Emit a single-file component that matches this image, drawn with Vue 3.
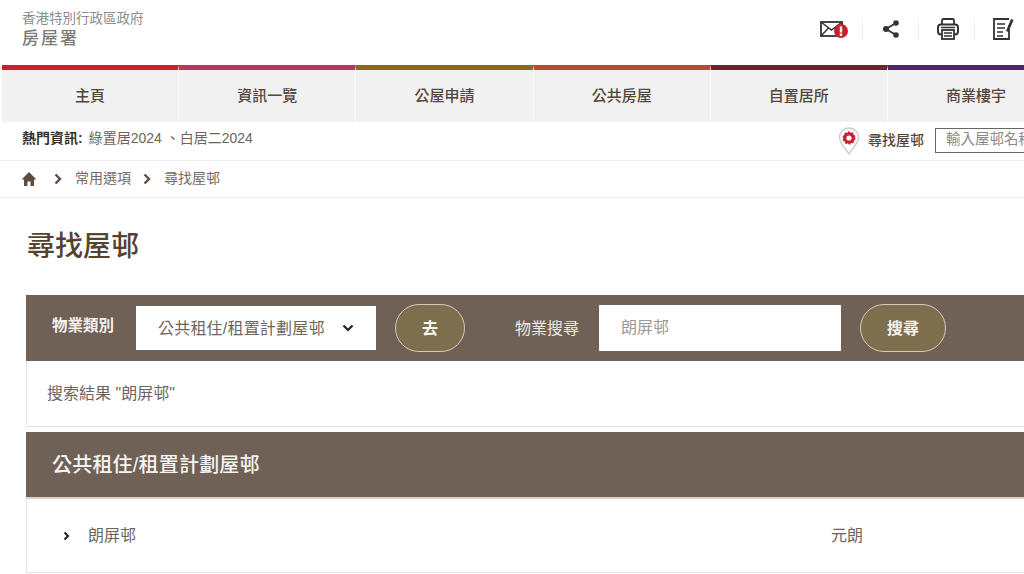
<script setup>
const navItems = [
  { label: '主頁', color: '#c8202f' },
  { label: '資訊一覽', color: '#b93562' },
  { label: '公屋申請', color: '#8a6a14' },
  { label: '公共房屋', color: '#b84d24' },
  { label: '自置居所', color: '#751f33' },
  { label: '商業樓宇', color: '#4f2767' },
]
</script>

<template>
  <div class="page">
    <header class="top">
      <div class="logo">
        <div class="logo-gov">香港特別行政區政府</div>
        <div class="logo-name">房屋署</div>
      </div>
      <div class="tools">
        <span class="tool tool-mail">
          <svg width="28" height="20" viewBox="0 0 28 20">
            <rect x="1" y="3" width="21" height="14" fill="#fff" stroke="#333" stroke-width="1.800" />
            <path d="M1 3l10.500 8L22 3M1 17l7.500-8M22 17l-7.500-8" fill="none" stroke="#333" stroke-width="1.400" />
            <circle cx="21" cy="12" r="7" fill="#c8202f" />
            <rect x="19.800" y="7.500" width="2.400" height="6" fill="#fff" />
            <rect x="19.800" y="14.500" width="2.400" height="2.400" fill="#fff" />
          </svg>
        </span>
        <span class="tool">
          <svg width="20" height="20" viewBox="0 0 20 20">
            <path d="M15 4L5 10l10 6" fill="none" stroke="#333" stroke-width="1.800" />
            <circle cx="15" cy="4" r="2.800" fill="#333" />
            <circle cx="5" cy="10" r="3" fill="#333" />
            <circle cx="15" cy="16" r="2.800" fill="#333" />
          </svg>
        </span>
        <span class="tool tool-print">
          <svg width="24" height="24" viewBox="0 0 24 24">
            <path d="M6 8V3.500Q6 2 7.500 2h9Q18 2 18 3.500V8" fill="none" stroke="#333" stroke-width="1.800" />
            <rect x="2" y="7.500" width="20" height="10" rx="3" fill="none" stroke="#333" stroke-width="2" />
            <rect x="6" y="13" width="12" height="9" fill="#fff" stroke="#333" stroke-width="1.800" />
            <path d="M8 16h8M8 19h8M5 10.500h14" stroke="#333" stroke-width="1.300" />
          </svg>
        </span>
        <span class="tool tool-last">
          <svg width="22" height="24" viewBox="0 0 22 24">
            <path d="M17 8v14H2V2h15" fill="none" stroke="#333" stroke-width="1.800" />
            <path d="M5 7h8M5 11h8M5 15h6M5 19h6" stroke="#333" stroke-width="1.600" />
            <path d="M14 14l5-12 2.500 1-5 12z" fill="#333" />
          </svg>
        </span>
      </div>
    </header>

    <nav class="nav">
      <div
        v-for="item in navItems"
        :key="item.label"
        class="nav-item"
        :style="{ borderTopColor: item.color }"
      >{{ item.label }}</div>
    </nav>

    <div class="hot">
      <div class="hot-left"><b>熱門資訊:</b><span class="hot-links">綠置居2024 、白居二2024</span></div>
      <div class="finder">
        <svg class="pin" width="22" height="28" viewBox="0 0 22 28">
          <path d="M11 27C7 21 1.500 16 1.500 10.500a9.500 9.500 0 0 1 19 0C20.500 16 15 21 11 27z" fill="#fff" stroke="#c9c9c9" stroke-width="1.300" />
          <circle cx="11" cy="11" r="4.200" fill="none" stroke="#c8202f" stroke-width="3.200" />
          <circle cx="11" cy="11" r="5.800" fill="none" stroke="#c8202f" stroke-width="1.400" stroke-dasharray="2 1.640" />
        </svg>
        <span class="finder-label">尋找屋邨</span>
        <div class="finder-input">輸入屋邨名稱</div>
      </div>
    </div>

    <div class="crumbs">
      <svg width="16" height="16" viewBox="0 0 16 16"><path d="M8 1L0.500 8.500H3V15h3.500v-4.500h3V15H13V8.500h2.500z" fill="#5e4c3e" /></svg>
      <svg class="chev" width="8" height="12" viewBox="0 0 8 12"><path d="M1.500 1.500L6 6l-4.500 4.500" fill="none" stroke="#5e4c3e" stroke-width="2.400" /></svg>
      <span class="up-more">常用選項</span>
      <svg class="chev chev-b" width="8" height="12" viewBox="0 0 8 12"><path d="M1.500 1.500L6 6l-4.500 4.500" fill="none" stroke="#5e4c3e" stroke-width="2.400" /></svg>
      <span class="up-more">尋找屋邨</span>
    </div>

    <main class="main">
      <h1 class="title">尋找屋邨</h1>

      <div class="search">
        <span class="search-label strong">物業類別</span>
        <div class="select">
          <span class="up spaced">公共租住/租置計劃屋邨</span>
          <svg width="12" height="8" viewBox="0 0 12 8"><path d="M1.500 1.500L6 6l4.500-4.500" fill="none" stroke="#222" stroke-width="2.200" /></svg>
        </div>
        <div class="btn btn-go">去</div>
        <span class="search-label second">物業搜尋</span>
        <div class="input">朗屏邨</div>
        <div class="btn btn-search">搜尋</div>
      </div>

      <div class="result"><span class="up">搜索結果 "朗屏邨"</span></div>

      <h2 class="section"><span class="up spaced">公共租住/租置計劃屋邨</span></h2>

      <div class="row">
        <svg class="row-chev" width="7" height="10" viewBox="0 0 7 10"><path d="M1.500 1.500L5 5 1.500 8.500" fill="none" stroke="#222" stroke-width="2" /></svg>
        <span class="row-name up">朗屏邨</span>
        <span class="row-district up">元朗</span>
      </div>
    </main>
  </div>
</template>

<style>
html, body { margin: 0; background: #fff; overflow: hidden; }
</style>

<style scoped>
.page {
  width: 1024px;
  height: 574px;
  overflow: hidden;
  font-family: "Liberation Sans", "Noto Sans CJK TC", sans-serif;
  color: #5e5048;
  background: #fff;
}
.page > * { width: 1070px; box-sizing: border-box; }
.up { margin-top: -3px; }
.up-more { margin-top: -5px; }
.spaced { letter-spacing: 0.200px; }
.top {
  height: 65px;
  display: flex;
  justify-content: space-between;
  padding: 11px 0 0 22px;
}
.logo-gov { font-size: 13.500px; line-height: 15px; color: #8c8c88; }
.logo-name { font-size: 17px; line-height: 22px; margin-top: 2px; color: #7d7a74; font-weight: 500; letter-spacing: 2px; }
.tools { display: flex; width: 225px; height: 24px; margin-top: 6px; align-items: center; margin-right: 39px; }
.tool { display: flex; justify-content: center; align-items: center; width: 56px; height: 20px; border-right: 1px solid #eee; box-sizing: border-box; flex: none; }
.tool-mail { width: 57px; justify-content: flex-start; padding-left: 14px; }
.tool-print { padding-left: 2px; }
.tool-last { border-right: 0; }
.nav { display: flex; height: 57px; padding-left: 2px; }
.nav-item {
  width: 177.200px;
  flex: none;
  box-sizing: border-box;
  border-top: 5px solid;
  border-right: 1px solid #fafafa;
  background: #f1f1f1;
  display: flex;
  align-items: center;
  justify-content: center;
  padding-bottom: 3px;
  font-size: 15px;
  font-weight: 500;
  color: #55463a;
}
.hot {
  height: 39px;
  border-bottom: 1px solid #eeeeee;
  display: flex;
  justify-content: space-between;
  align-items: center;
  padding-left: 22px;
  font-size: 14px;
}
.hot-left { margin-top: -9px; }
.hot-left b { color: #3b3028; font-weight: 700; font-size: 14px; }
.hot-links { margin-left: 6px; color: #6f645c; }
.finder { display: flex; align-items: center; width: 232px; flex: none; }
.pin { margin-right: 8px; }
.finder-label { font-size: 14px; font-weight: 500; color: #55463a; margin-right: 11px; margin-top: -5px; white-space: nowrap; }
.finder-input {
  width: 135px;
  height: 25px;
  box-sizing: border-box;
  flex: none;
  border: 1px solid #666;
  font-size: 14.500px;
  line-height: 20px;
  padding-left: 10px;
  margin-top: -2px;
  color: #8a8a8a;
  white-space: nowrap;
  overflow: hidden;
}
.crumbs {
  height: 37px;
  border-bottom: 1px solid #eeeeee;
  display: flex;
  align-items: center;
  padding-left: 21px;
  font-size: 14px;
  color: #77695f;
}
.chev { margin: 0 13px 0 17px; }
.chev-b { margin: 0 13px 0 12px; }
.main { padding-left: 26px; }
.title {
  margin: 0;
  height: 97px;
  display: flex;
  align-items: center;
  padding-left: 1px;
  padding-bottom: 6px;
  box-sizing: border-box;
  font-size: 28px;
  font-weight: 500;
  color: #55422f;
}
.search {
  height: 66px;
  background: #706156;
  display: flex;
  align-items: center;
  color: #fff;
  padding-left: 26px;
}
.search-label { font-size: 16px; color: #ece8e4; }
.strong { font-weight: 700; color: #f4f1ee; margin-top: -8px; width: 84px; flex: none; font-size: 15.500px; }
.select {
  width: 240px;
  height: 44px;
  flex: none;
  background: #fff;
  display: flex;
  align-items: center;
  justify-content: space-between;
  padding: 0 22px;
  box-sizing: border-box;
  font-size: 16px;
  color: #6f645c;
  white-space: nowrap;
}
.btn {
  height: 48px;
  box-sizing: border-box;
  border: 1.500px solid #d5cabb;
  border-radius: 24px;
  background: #7d6e4e;
  display: flex;
  align-items: center;
  justify-content: center;
  padding-bottom: 3px;
  font-size: 16px;
  font-weight: 700;
  color: #f6f4f0;
  flex: none;
}
.btn-go { width: 70px; margin-left: 19px; }
.second { margin-left: 50px; margin-top: -2px; width: 84px; flex: none; }
.input {
  width: 242px;
  height: 46px;
  flex: none;
  background: #fff;
  box-sizing: border-box;
  padding-left: 22px;
  line-height: 46px;
  font-size: 16px;
  color: #9a9a9a;
}
.btn-search { width: 86px; margin-left: 19px; }
.result {
  height: 66px;
  box-sizing: border-box;
  border: 1px solid #e6e6e6;
  border-top: 0;
  display: flex;
  align-items: center;
  padding-left: 20px;
  font-size: 16px;
  color: #6f645c;
}
.section {
  margin: 5px 0 0;
  height: 67px;
  box-sizing: border-box;
  background: #706156;
  border-bottom: 2px solid #d9d5d1;
  display: flex;
  align-items: center;
  padding-left: 26px;
  font-size: 20px;
  font-weight: 500;
  color: #f6f4f0;
}
.row {
  height: 74px;
  box-sizing: border-box;
  border: 1px solid #e6e6e6;
  border-top: 0;
  display: flex;
  align-items: center;
  font-size: 16px;
  color: #6f645c;
}
.row-chev { margin-left: 36px; }
.row-name { margin-left: 18px; width: 743px; flex: none; }
</style>
